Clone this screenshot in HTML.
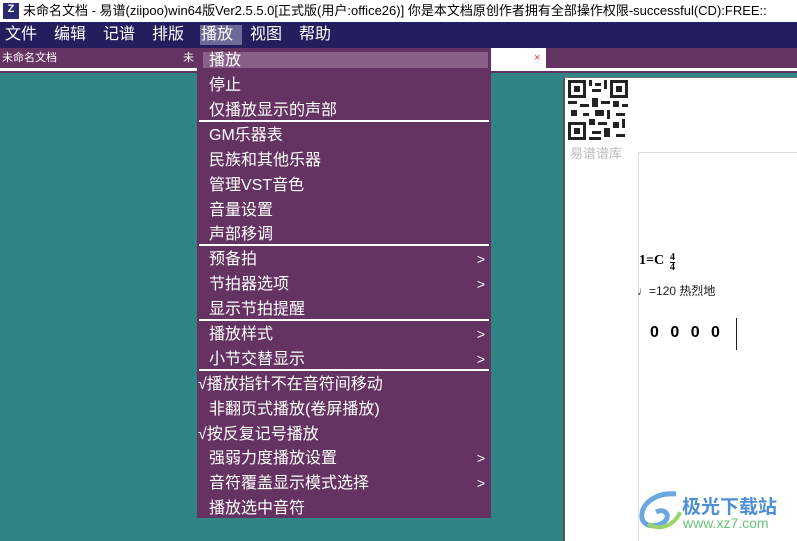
<!DOCTYPE html>
<html><head><meta charset="utf-8"><style>
*{margin:0;padding:0;box-sizing:border-box}
body{width:797px;height:541px;overflow:hidden;position:relative;background:#2e8583;font-family:"Liberation Sans","Noto Sans CJK SC",sans-serif}
.abs{position:absolute}
#title{left:0;top:0;width:797px;height:22px;background:#fff;font-size:13px;color:#000;line-height:22px}
#mbar{left:0;top:22px;width:797px;height:26px;background:#231f5e;color:#fff;font-size:16px}
#mbar span{position:absolute;top:3px;line-height:20px}
#tabs{left:0;top:48px;width:797px;height:20px;background:#643362;color:#fff;font-size:11px;line-height:20px}
#menu{left:197px;top:48px;width:294px;height:470px;background:#643362;color:#fff;font-size:16px}
.it{position:absolute;left:12px;right:0;height:25px;line-height:25px}
.it .ar{position:absolute;right:6px;top:0;font-size:14px}
.sep{position:absolute;left:2px;right:2px;height:2px;background:#fff}
</style></head><body>
<div id="title" class="abs">
 <div class="abs" style="left:3px;top:3px;width:16px;height:16px;background:#2a2a70;color:#fff;font-size:11px;font-weight:bold;line-height:12px;text-align:center">Z</div>
 <span class="abs" style="left:23px;top:0">未命名文档 - 易谱(ziipoo)win64版Ver2.5.5.0[正式版(用户:office26)] 你是本文档原创作者拥有全部操作权限-successful(CD):FREE::</span>
</div>
<div id="mbar" class="abs">
 <span style="left:5px">文件</span><span style="left:54px">编辑</span><span style="left:103px">记谱</span><span style="left:152px">排版</span>
 <span style="left:200px;top:3px;width:42px;height:20px;background:#6c6a96"></span><span style="left:201px">播放</span>
 <span style="left:250px">视图</span><span style="left:299px">帮助</span>
</div>
<div id="tabs" class="abs"><span class="abs" style="left:2px">未命名文档</span><span class="abs" style="left:183px">未</span>
 <div class="abs" style="left:491px;top:0;width:55px;height:20px;background:#fff"><span class="abs" style="left:43px;top:0;color:#e33;font-size:11px">×</span></div>
</div>
<div class="abs" style="left:0;top:68px;width:797px;height:3px;background:#fff"></div>
<div class="abs" style="left:0;top:71px;width:797px;height:2px;background:#643362"></div>
<!-- paper -->
<div class="abs" style="left:563px;top:77px;width:234px;height:464px;background:#fff;border-left:2px solid #555;border-top:1px solid #777"></div>
<svg class="abs" style="left:568px;top:80px" width="60" height="60" viewBox="0 0 20 20">
 <rect width="20" height="20" fill="#fff"/>
 <g fill="#222"><rect x="0" y="0" width="6" height="6"/><rect x="14" y="0" width="6" height="6"/><rect x="0" y="14" width="6" height="6"/></g>
 <g fill="#fff"><rect x="1" y="1" width="4" height="4"/><rect x="15" y="1" width="4" height="4"/><rect x="1" y="15" width="4" height="4"/></g>
 <g fill="#222"><rect x="2" y="2" width="2" height="2"/><rect x="16" y="2" width="2" height="2"/><rect x="2" y="16" width="2" height="2"/>
 <rect x="7" y="0" width="1" height="2"/><rect x="9" y="1" width="2" height="1"/><rect x="12" y="0" width="1" height="3"/><rect x="8" y="3" width="3" height="1"/>
 <rect x="0" y="7" width="3" height="1"/><rect x="4" y="8" width="3" height="1"/><rect x="8" y="6" width="2" height="3"/><rect x="11" y="7" width="3" height="1"/><rect x="15" y="7" width="2" height="2"/><rect x="18" y="8" width="2" height="1"/>
 <rect x="1" y="10" width="2" height="2"/><rect x="5" y="11" width="2" height="1"/><rect x="9" y="10" width="3" height="2"/><rect x="13" y="10" width="1" height="3"/><rect x="16" y="11" width="3" height="1"/>
 <rect x="7" y="13" width="2" height="2"/><rect x="10" y="14" width="3" height="1"/><rect x="15" y="14" width="2" height="2"/><rect x="18" y="13" width="1" height="3"/>
 <rect x="8" y="17" width="3" height="1"/><rect x="12" y="16" width="2" height="3"/><rect x="16" y="18" width="3" height="1"/><rect x="7" y="19" width="4" height="1"/></g>
</svg>
<div class="abs" style="left:570px;top:143px;font-size:13px;color:#bbb">易谱谱库</div>
<div class="abs" style="left:638px;top:152px;width:159px;height:389px;border-left:1px solid #ddd;border-top:1px solid #ddd"></div>
<div class="abs" style="left:639px;top:253px;font-family:'Liberation Serif',serif;font-weight:bold;font-size:14px">1=C</div>
<div class="abs" style="left:670px;top:253px;font-family:'Liberation Serif',serif;font-weight:bold;font-size:10px;line-height:9px;text-align:center">4<br><span style="display:block;border-top:1px solid #000">4</span></div>
<div class="abs" style="left:637px;top:282px;font-size:12px;color:#222">♩=120 热烈地</div>
<div class="abs" style="left:650px;top:324px;font-size:16px;font-weight:bold;word-spacing:7px">0 0 0 0</div>
<div class="abs" style="left:736px;top:318px;width:1px;height:32px;background:#222"></div>
<!-- watermark -->
<svg class="abs" style="left:636px;top:490px" width="50" height="42" viewBox="0 0 50 42">
 <path d="M40 4 C20 2 4 14 6 28 C8 38 24 38 30 30 C34 24 28 18 20 22" fill="none" stroke="#6aa6e0" stroke-width="5"/>
 <path d="M12 34 C24 42 40 34 44 22" fill="none" stroke="#9cd46a" stroke-width="4"/>
</svg>
<div class="abs" style="left:682px;top:492px;font-size:19px;font-weight:bold;color:#4d8fd6">极光下载站</div>
<div class="abs" style="left:683px;top:515px;font-size:14px;color:#6cc27a">www.xz7.com</div>
<!-- menu -->
<div id="menu" class="abs">
 <div class="abs" style="left:6px;top:4px;width:285px;height:16px;background:#8a5f88"></div>
 <div class="it" style="top:0">播放</div>
 <div class="it" style="top:25px">停止</div>
 <div class="it" style="top:50px">仅播放显示的声部</div>
 <div class="sep" style="top:72px"></div>
 <div class="it" style="top:75px">GM乐器表</div>
 <div class="it" style="top:100px">民族和其他乐器</div>
 <div class="it" style="top:125px">管理VST音色</div>
 <div class="it" style="top:150px">音量设置</div>
 <div class="it" style="top:174px">声部移调</div>
 <div class="sep" style="top:196px"></div>
 <div class="it" style="top:199px">预备拍<span class="ar">&gt;</span></div>
 <div class="it" style="top:224px">节拍器选项<span class="ar">&gt;</span></div>
 <div class="it" style="top:249px">显示节拍提醒</div>
 <div class="sep" style="top:271px"></div>
 <div class="it" style="top:274px">播放样式<span class="ar">&gt;</span></div>
 <div class="it" style="top:299px">小节交替显示<span class="ar">&gt;</span></div>
 <div class="sep" style="top:321px"></div>
 <div class="it" style="top:324px;left:1px">√播放指针不在音符间移动</div>
 <div class="it" style="top:349px">非翻页式播放(卷屏播放)</div>
 <div class="it" style="top:374px;left:1px">√按反复记号播放</div>
 <div class="it" style="top:398px">强弱力度播放设置<span class="ar">&gt;</span></div>
 <div class="it" style="top:423px">音符覆盖显示模式选择<span class="ar">&gt;</span></div>
 <div class="it" style="top:448px">播放选中音符</div>
</div>
</body></html>
